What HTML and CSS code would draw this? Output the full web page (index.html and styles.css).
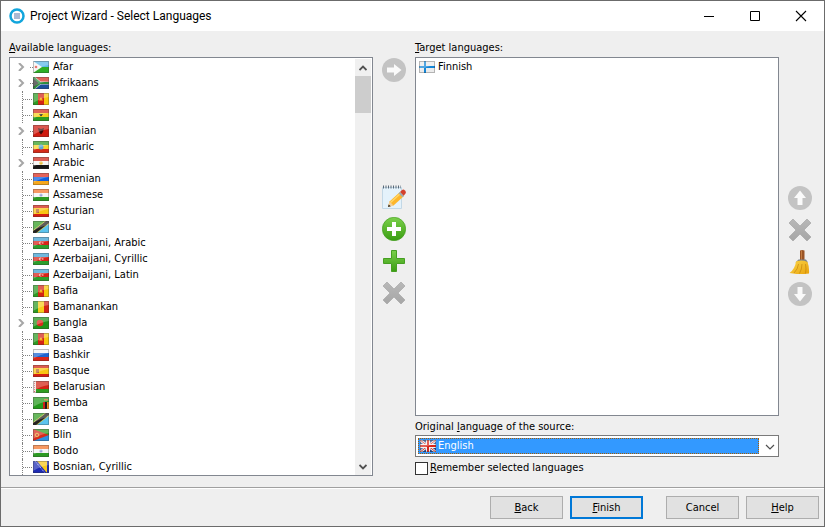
FILE: index.html
```html
<!DOCTYPE html>
<html lang="en">
<head>
    <meta charset="UTF-8">
    <title>Project Wizard - Select Languages</title>
    <link rel="stylesheet" href="styles.css">
</head>
<body>
    <!-- Flags and gradients shared by the lists -->
    <svg class="defs" width="0" height="0" aria-hidden="true">
        <defs>
            <linearGradient id="green" x1="0" y1="0" x2="0" y2="1"><stop offset="0" stop-color="#7bd04b"/><stop offset="1" stop-color="#3a9d12"/></linearGradient>
            <linearGradient id="grey" x1="0" y1="0" x2="0" y2="1"><stop offset="0" stop-color="#b8b8b8"/><stop offset="1" stop-color="#a6a6a6"/></linearGradient>
            <linearGradient id="straw" x1="0" y1="0" x2="1" y2="1"><stop offset="0" stop-color="#fbd64a"/><stop offset="1" stop-color="#e9a30c"/></linearGradient>
            <symbol id="gloss" viewBox="0 0 16 12">
                <path d="M0 0H16V4Q8 5 0 10Z" fill="#fff" opacity=".27"/>
                <rect x=".5" y=".5" width="15" height="11" fill="none" stroke="#333" stroke-opacity=".3"/>
            </symbol>
            <symbol id="dj" viewBox="0 0 16 12"><path d="M0 0H16V6H0Z" fill="#5cb8ea"/><path d="M0 6H16V12H0Z" fill="#2fae26"/><path d="M0 0L9 6L0 12Z" fill="#f4f4f4"/><circle cx="3" cy="6" r="1.3" fill="#e0443a"/><use href="#gloss"/></symbol>
            <symbol id="za" viewBox="0 0 16 12"><path d="M0 0H16V6H0Z" fill="#d8281e"/><path d="M0 6H16V12H0Z" fill="#1b4f9c"/><path d="M0 0L7 6H16M7 6L0 12" fill="none" stroke="#ddd" stroke-width="3"/><path d="M0 0L7 6L0 12Z" fill="#333"/><path d="M0 0L7 6H16M7 6L0 12" fill="none" stroke="#2d8d3d" stroke-width="2"/><use href="#gloss"/></symbol>
            <symbol id="cm" viewBox="0 0 16 12"><path d="M0 0H6V12H0Z" fill="#2d9a22"/><path d="M5 0H11V12H5Z" fill="#d42414"/><path d="M11 0H16V12H11Z" fill="#f8c90d"/><path d="M8 4L10 7.500H6Z" fill="#f6b414"/><use href="#gloss"/></symbol>
            <symbol id="gh" viewBox="0 0 16 12"><path d="M0 0H16V4H0Z" fill="#d42a18"/><path d="M0 4H16V8H0Z" fill="#f7cf1d"/><path d="M0 8H16V12H0Z" fill="#2f9d20"/><path d="M6 5H10L8 7.500Z" fill="#222"/><use href="#gloss"/></symbol>
            <symbol id="al" viewBox="0 0 16 12"><path d="M0 0H16V12H0Z" fill="#cf1b10"/><path d="M5 3L8 4L11 3L10 7L8 9.500L6 7Z" fill="#3a0c0a"/><use href="#gloss"/></symbol>
            <symbol id="et" viewBox="0 0 16 12"><path d="M0 0H16V4H0Z" fill="#2f9d20"/><path d="M0 4H16V8H0Z" fill="#f7d32a"/><path d="M0 8H16V12H0Z" fill="#d42a18"/><circle cx="8" cy="6" r="2.500" fill="#5aa7d8"/><use href="#gloss"/></symbol>
            <symbol id="eg" viewBox="0 0 16 12"><path d="M0 0H16V4H0Z" fill="#cf2418"/><path d="M0 4H16V8H0Z" fill="#f6f6f6"/><path d="M0 8H16V12H0Z" fill="#161616"/><circle cx="8" cy="6" r="1.800" fill="#e9bd3c"/><use href="#gloss"/></symbol>
            <symbol id="am" viewBox="0 0 16 12"><path d="M0 0H16V4H0Z" fill="#dc2a1e"/><path d="M0 4H16V8H0Z" fill="#0f5fe0"/><path d="M0 8H16V12H0Z" fill="#f6a81c"/><use href="#gloss"/></symbol>
            <symbol id="in" viewBox="0 0 16 12"><path d="M0 0H16V4H0Z" fill="#f3742a"/><path d="M0 4H16V8H0Z" fill="#f4f4f4"/><path d="M0 8H16V12H0Z" fill="#2c9a22"/><circle cx="8" cy="6" r="1.600" fill="#98a2d4"/><use href="#gloss"/></symbol>
            <symbol id="es" viewBox="0 0 16 12"><path d="M0 0H16V12H0Z" fill="#d4200f"/><path d="M0 3H16V9H0Z" fill="#f9c613"/><path d="M3 4H6V8H3Z" fill="#b5652b"/><use href="#gloss"/></symbol>
            <symbol id="tz" viewBox="0 0 16 12"><path d="M0 0H16L0 12Z" fill="#2f9d20"/><path d="M16 0V12H0Z" fill="#5cc3ee"/><path d="M-1 13L17 -1" stroke="#e8cf3a" stroke-width="4.500"/><path d="M-1 13L17 -1" stroke="#222" stroke-width="3.400"/><use href="#gloss"/></symbol>
            <symbol id="az" viewBox="0 0 16 12"><path d="M0 0H16V4H0Z" fill="#3ba0d2"/><path d="M0 4H16V8H0Z" fill="#d82318"/><path d="M0 8H16V12H0Z" fill="#2c9e2c"/><circle cx="7.500" cy="6" r="1.500" fill="#f3c4bf"/><circle cx="8.200" cy="6" r="1" fill="#d82318"/><circle cx="9.800" cy="6" r=".8" fill="#f3c4bf"/><use href="#gloss"/></symbol>
            <symbol id="ml" viewBox="0 0 16 12"><path d="M0 0H6V12H0Z" fill="#2d9a22"/><path d="M5 0H11V12H5Z" fill="#f8cd1a"/><path d="M11 0H16V12H11Z" fill="#d42414"/><use href="#gloss"/></symbol>
            <symbol id="bd" viewBox="0 0 16 12"><path d="M0 0H16V12H0Z" fill="#1f9418"/><circle cx="7" cy="6" r="3.300" fill="#dc2a1c"/><use href="#gloss"/></symbol>
            <symbol id="ru" viewBox="0 0 16 12"><path d="M0 0H16V4H0Z" fill="#f4f4f4"/><path d="M0 4H16V8H0Z" fill="#1c63d0"/><path d="M0 8H16V12H0Z" fill="#d8261a"/><use href="#gloss"/></symbol>
            <symbol id="by" viewBox="0 0 16 12"><path d="M0 0H16V8H0Z" fill="#d42414"/><path d="M0 8H16V12H0Z" fill="#2f9d20"/><path d="M0 0H3V12H0Z" fill="#eee2e0"/><path d="M1.500 0V12" stroke="#d66" stroke-dasharray="1 1"/><use href="#gloss"/></symbol>
            <symbol id="zm" viewBox="0 0 16 12"><path d="M0 0H16V12H0Z" fill="#239a1b"/><path d="M10 5H12V12H10Z" fill="#cf1f14"/><path d="M12 5H14V12H12Z" fill="#1b1b1b"/><path d="M14 5H16V12H14Z" fill="#ef8b1c"/><path d="M11 2H15V3.500H11Z" fill="#c8742a"/><use href="#gloss"/></symbol>
            <symbol id="er" viewBox="0 0 16 12"><path d="M0 0H16V6H0Z" fill="#2f9d20"/><path d="M0 6H16V12H0Z" fill="#2f8fe0"/><path d="M0 0L16 6L0 12Z" fill="#d82a1c"/><circle cx="4" cy="6" r="1.800" fill="none" stroke="#e9b23c"/><use href="#gloss"/></symbol>
            <symbol id="ba" viewBox="0 0 16 12"><path d="M0 0H16V12H0Z" fill="#1e2bb4"/><path d="M4 0H14V12Z" fill="#f7c71a"/><path d="M2 0L12 12" stroke="#d6d9f5" stroke-dasharray="1 1"/><use href="#gloss"/></symbol>
            <symbol id="fi" viewBox="0 0 16 12"><path d="M0 0H16V12H0Z" fill="#ebebeb"/><path d="M5 0H7V12H5ZM0 5H16V7H0Z" fill="#1285d6"/><use href="#gloss"/></symbol>
            <symbol id="gb" viewBox="0 0 16 12"><path d="M0 0H16V12H0Z" fill="#24468c"/><path d="M0 0L16 12M16 0L0 12" stroke="#eee" stroke-width="2.600"/><path d="M0 0L16 12M16 0L0 12" stroke="#d43a30"/><path d="M8 0V12M0 6H16" stroke="#f2f2f2" stroke-width="4"/><path d="M8 0V12M0 6H16" stroke="#d8261a" stroke-width="2"/><use href="#gloss"/></symbol>
            <symbol id="chevron" viewBox="0 0 8 8"><path d="M1 0L5 4L1 8" fill="none" stroke="#a6a6a6" stroke-width="2"/></symbol>
            <symbol id="cross" viewBox="0 0 24 24"><path d="M1 5L5 1L12 8L19 1L23 5L16 12L23 19L19 23L12 16L5 23L1 19L8 12Z" fill="url(#grey)" stroke="#a0a0a0" stroke-width=".6"/></symbol>
        </defs>
    </svg>

    <div class="window">
        <header class="titlebar">
            <svg class="app-icon" viewBox="0 0 16 16"><circle cx="8" cy="8" r="6.500" fill="#fff" stroke="#12a5dc" stroke-width="2.500"/><path d="M5 6H11M5 8H11M5 10H11" stroke="#8fa3c4" stroke-width="1.300"/></svg>
            <h1 class="title">Project Wizard - Select Languages</h1>
            <button class="caption" type="button" aria-label="Minimize"><svg viewBox="0 0 12 12"><path d="M1 6.500H11" stroke="#000"/></svg></button>
            <button class="caption" type="button" aria-label="Maximize"><svg viewBox="0 0 12 12"><path d="M1.500 1.500H10.500V10.500H1.500Z" fill="none" stroke="#000"/></svg></button>
            <button class="caption" type="button" aria-label="Close"><svg viewBox="0 0 12 12"><path d="M1 1L11 11M11 1L1 11" stroke="#000" stroke-width="1.100"/></svg></button>
        </header>

        <main class="content">
            <section class="panel">
                <h2 class="label" id="available-label"><u>A</u>vailable languages:</h2>
                <div class="list">
                    <ul class="tree" aria-labelledby="available-label">
                        <li class="node parent"><svg class="expander"><use href="#chevron"/></svg><svg class="flag"><use href="#dj"/></svg><span>Afar</span></li>
                        <li class="node parent"><svg class="expander"><use href="#chevron"/></svg><svg class="flag"><use href="#za"/></svg><span>Afrikaans</span></li>
                        <li class="node"><svg class="flag"><use href="#cm"/></svg><span>Aghem</span></li>
                        <li class="node"><svg class="flag"><use href="#gh"/></svg><span>Akan</span></li>
                        <li class="node parent"><svg class="expander"><use href="#chevron"/></svg><svg class="flag"><use href="#al"/></svg><span>Albanian</span></li>
                        <li class="node"><svg class="flag"><use href="#et"/></svg><span>Amharic</span></li>
                        <li class="node parent"><svg class="expander"><use href="#chevron"/></svg><svg class="flag"><use href="#eg"/></svg><span>Arabic</span></li>
                        <li class="node"><svg class="flag"><use href="#am"/></svg><span>Armenian</span></li>
                        <li class="node"><svg class="flag"><use href="#in"/></svg><span>Assamese</span></li>
                        <li class="node"><svg class="flag"><use href="#es"/></svg><span>Asturian</span></li>
                        <li class="node"><svg class="flag"><use href="#tz"/></svg><span>Asu</span></li>
                        <li class="node"><svg class="flag"><use href="#az"/></svg><span>Azerbaijani, Arabic</span></li>
                        <li class="node"><svg class="flag"><use href="#az"/></svg><span>Azerbaijani, Cyrillic</span></li>
                        <li class="node"><svg class="flag"><use href="#az"/></svg><span>Azerbaijani, Latin</span></li>
                        <li class="node"><svg class="flag"><use href="#cm"/></svg><span>Bafia</span></li>
                        <li class="node"><svg class="flag"><use href="#ml"/></svg><span>Bamanankan</span></li>
                        <li class="node parent"><svg class="expander"><use href="#chevron"/></svg><svg class="flag"><use href="#bd"/></svg><span>Bangla</span></li>
                        <li class="node"><svg class="flag"><use href="#cm"/></svg><span>Basaa</span></li>
                        <li class="node"><svg class="flag"><use href="#ru"/></svg><span>Bashkir</span></li>
                        <li class="node"><svg class="flag"><use href="#es"/></svg><span>Basque</span></li>
                        <li class="node"><svg class="flag"><use href="#by"/></svg><span>Belarusian</span></li>
                        <li class="node"><svg class="flag"><use href="#zm"/></svg><span>Bemba</span></li>
                        <li class="node"><svg class="flag"><use href="#tz"/></svg><span>Bena</span></li>
                        <li class="node"><svg class="flag"><use href="#er"/></svg><span>Blin</span></li>
                        <li class="node"><svg class="flag"><use href="#in"/></svg><span>Bodo</span></li>
                        <li class="node"><svg class="flag"><use href="#ba"/></svg><span>Bosnian, Cyrillic</span></li>
                    </ul>
                    <div class="scrollbar">
                        <button class="arrow" type="button" aria-label="Scroll up"><svg viewBox="0 0 8 8"><path d="M0.500 6L4 2.500L7.500 6" fill="none" stroke="#505050" stroke-width="1.800"/></svg></button>
                        <div class="thumb"></div>
                        <button class="arrow" type="button" aria-label="Scroll down"><svg viewBox="0 0 8 8"><path d="M0.500 2L4 5.500L7.500 2" fill="none" stroke="#505050" stroke-width="1.800"/></svg></button>
                    </div>
                </div>
            </section>

            <div class="tools">
                <button class="tool" type="button" aria-label="Add to target" disabled><svg viewBox="0 0 24 24"><circle cx="12" cy="12" r="12" fill="#c3c3c3"/><path d="M5 9.500H12V6L19.500 12L12 18V14.500H5Z" fill="#fafafa"/></svg></button>
                <div class="tool-group">
                    <button class="tool" type="button" aria-label="Edit language"><svg viewBox="0 0 24 24">
                        <path d="M0.500 2.500H19.500V23.500H0.500Z" fill="#e4f2fb" stroke="#c3d8e6"/><path d="M1 2H19" stroke="#586878" stroke-width="3" stroke-dasharray="1 1.500"/>
                        <path d="M6 22L7.500 16.500L18 7L22 11L11.500 20.500Z" fill="#fdb62b"/><path d="M8.500 17.500L19 8" stroke="#ffd768" stroke-width="1.500"/><path d="M18 7L20 5Q21.500 4 23 5.500Q24.500 7 23.500 8.500L21.500 11Z" fill="#d5402b"/><path d="M16.500 8.200L18 7L22 11L20.500 12.200Z" fill="#9eabb0"/><path d="M6 22L7.500 16.500L11.500 20.500Z" fill="#f2cf9c"/><path d="M6 22L6.700 19.500L8.700 21.200Z" fill="#222"/></svg></button>
                    <button class="tool" type="button" aria-label="Add language"><svg viewBox="0 0 24 24"><circle cx="12" cy="12" r="11.700" fill="url(#green)" stroke="#3c9a18" stroke-width=".6"/><path d="M10 5H14V10H19V14H14V19H10V14H5V10H10Z" fill="#fff"/></svg></button>
                    <button class="tool" type="button" aria-label="Add custom language"><svg viewBox="0 0 24 24"><path d="M9.500 1.500H14.500V9.500H22.500V14.500H14.500V22.500H9.500V14.500H1.500V9.500H9.500Z" fill="url(#green)" stroke="#469f22"/></svg></button>
                    <button class="tool" type="button" aria-label="Delete language" disabled><svg><use href="#cross"/></svg></button>
                </div>
            </div>

            <section class="panel">
                <h2 class="label" id="target-label"><u>T</u>arget languages:</h2>
                <div class="list">
                    <ul class="target" aria-labelledby="target-label">
                        <li class="item"><svg class="flag"><use href="#fi"/></svg><span>Finnish</span></li>
                    </ul>
                </div>
                <label class="source-label" for="source">Original <u>l</u>anguage of the source:</label>
                <div class="combo">
                    <select class="source" id="source">
                        <option>English</option>
                    </select>
                    <svg class="flag combo-flag"><use href="#gb"/></svg>
                    <svg class="combo-arrow" viewBox="0 0 10 8"><path d="M1 2L5 6L9 2" fill="none" stroke="#505050" stroke-width="1.200"/></svg>
                </div>
                <div class="remember">
                    <input class="check" type="checkbox" id="remember">
                    <label for="remember"><u>R</u>emember selected languages</label>
                </div>
            </section>

            <div class="tools order">
                <div class="tool-group">
                    <button class="tool" type="button" aria-label="Move up" disabled><svg viewBox="0 0 24 24"><circle cx="12" cy="12" r="12" fill="#c3c3c3"/><path d="M12 4.500L18 12H14.500V19H9.500V12H6Z" fill="#fafafa"/></svg></button>
                    <button class="tool" type="button" aria-label="Remove" disabled><svg><use href="#cross"/></svg></button>
                    <button class="tool" type="button" aria-label="Clear"><svg viewBox="0 0 24 24">
                        <path d="M12 0.500Q14.200 -0.500 16.500 0.500V10H12Z" fill="#9a5426"/><path d="M13.500 0.500V10" stroke="#c37c42"/><path d="M10.500 9.500H18L20 12.500H7.500Z" fill="#77818d"/>
                        <path d="M8 11.500Q14 9.500 19.500 12Q21.500 17 21 23.500Q11 25 1.500 23Q7 19 8 11.500Z" fill="url(#straw)"/><path d="M10.500 14Q10 19 6 23M14 14Q14 19 11.500 23.500M17.500 14Q18.500 19 17.500 23.500" fill="none" stroke="#bc7d0c" stroke-width=".6"/></svg></button>
                    <button class="tool" type="button" aria-label="Move down" disabled><svg viewBox="0 0 24 24"><circle cx="12" cy="12" r="12" fill="#c3c3c3"/><path d="M12 19.500L18 12H14.500V5H9.500V12H6Z" fill="#fafafa"/></svg></button>
                </div>
            </div>
        </main>

        <footer class="actions">
            <div class="pair">
                <button class="btn" type="button"><u>B</u>ack</button>
                <button class="btn default" type="button"><u>F</u>inish</button>
            </div>
            <div class="pair">
                <button class="btn" type="button">Cancel</button>
                <button class="btn" type="button"><u>H</u>elp</button>
            </div>
        </footer>
    </div>
</body>
</html>
```
FILE: styles.css
```css
*,
*::before {
    box-sizing: border-box;
}

body {
    margin: 0;
    color: #000;
    font-family: "DejaVu Sans Condensed", sans-serif;
    font-size: 11px;
    line-height: 16px;
}

button, select {
    color: inherit;
    font: inherit;
}

ul {
    margin: 0;
    padding: 0;
    list-style: none;
}

svg {
    display: block;
}

.defs {
    position: absolute;
}

.window {
    display: flex;
    flex-direction: column;
    min-height: 100vh;
    border: 1px solid #6b6b6b;
    background: #efefef;
}

/* Title bar */
.titlebar {
    display: flex;
    align-items: center;
    height: 30px;
    padding-left: 8px;
    background: #fff;
}

.app-icon {
    width: 16px;
    height: 16px;
}

.title {
    flex: 1;
    margin: 0 0 0 5px;
    font-family: Roboto, sans-serif;
    font-size: 12px;
    font-weight: normal;
}

.caption {
    display: flex;
    align-items: center;
    justify-content: center;
    width: 46px;
    height: 30px;
    padding: 0;
    border: 0;
    background: none;
}

.caption svg {
    width: 12px;
    height: 12px;
}

/* Panels */
.content {
    display: flex;
    flex: 1;
    padding: 0 3px 11px 8px;
}

.panel {
    display: flex;
    flex: 1;
    flex-direction: column;
}

.label {
    margin: 0;
    padding: 9px 0 1px;
    font-size: 11px;
    font-weight: normal;
}

.list {
    display: flex;
    flex: 1;
    padding: 1px 1px 0;
    border: 1px solid #828790;
    background: #fff;
}

.flag {
    flex: none;
    width: 16px;
    height: 12px;
}

.tree {
    flex: 1;
}

.node {
    display: flex;
    align-items: center;
    gap: 4px;
    height: 16px;
    padding-left: 11px;
}

/* dotted connector lines */
.node::before {
    content: "";
    width: 11px;
    height: 16px;
    margin-right: -4px;
    border-left: 1px dotted #808080;
    background: repeating-linear-gradient(to right, #808080 0 1px, #fff 1px 2px) 0 8px / 100% 1px no-repeat;
}

.parent {
    padding-left: 7px;
}

.parent::before {
    order: 1;
    width: 3px;
    border-left: 0;
}

.parent .flag,
.parent span {
    order: 2;
}

.expander {
    width: 8px;
    height: 8px;
}

.scrollbar {
    display: flex;
    flex-direction: column;
    width: 16px;
    background: #f0f0f0;
}

.arrow {
    display: flex;
    align-items: center;
    justify-content: center;
    height: 17px;
    padding: 0;
    border: 0;
    background: none;
}

.arrow:last-child {
    margin-top: auto;
}

.arrow svg {
    width: 8px;
    height: 8px;
}

.thumb {
    height: 37px;
    background: #cdcdcd;
}

.target {
    flex: 1;
    padding-left: 2px;
}

.item {
    display: flex;
    align-items: center;
    gap: 3px;
    height: 16px;
}

/* Source language */
.source-label {
    padding-top: 2px;
    line-height: 17px;
}

.combo {
    position: relative;
    display: flex;
    height: 22px;
    padding: 2px 19px 2px 2px;
    border: 1px solid #7a7a7a;
    background: #fff;
}

.source {
    flex: 1;
    padding: 0 0 0 19px;
    border: 1px dotted #a85c00;
    border-radius: 0;
    outline: 0;
    background: #3399ff;
    color: #fff;
    line-height: 14px;
    appearance: none;
}

.combo-flag {
    position: absolute;
    top: 4px;
    left: 4px;
}

.combo-arrow {
    position: absolute;
    top: 7px;
    right: 3px;
    width: 10px;
    height: 8px;
    pointer-events: none;
}

.remember {
    display: flex;
    align-items: center;
    gap: 2px;
    padding-top: 3px;
}

.check {
    width: 13px;
    height: 13px;
    margin: 0;
    border: 1px solid #333;
    background: #fff;
    appearance: none;
}

.check:checked {
    background: #333;
}

/* Icon buttons */
.tools {
    display: flex;
    flex-direction: column;
    align-items: center;
    width: 42px;
    padding-top: 27px;
}

.tool-group {
    display: flex;
    flex-direction: column;
    gap: 8px;
    margin-top: 103px;
}

.order .tool-group {
    margin-top: 128px;
}

.tool {
    width: 24px;
    height: 24px;
    padding: 0;
    border: 0;
    background: none;
}

.tool svg {
    width: 24px;
    height: 24px;
}

/* Bottom buttons */
.actions {
    display: flex;
    justify-content: flex-end;
    gap: 23px;
    padding: 8px 5px 7px;
    border-top: 1px solid #a0a0a0;
    box-shadow: inset 0 1px #fff;
}

.pair {
    display: flex;
    gap: 7px;
}

.btn {
    width: 73px;
    height: 23px;
    padding: 0;
    border: 1px solid #adadad;
    background: #e1e1e1;
}

.default {
    border: 2px solid #0078d7;
}
```
